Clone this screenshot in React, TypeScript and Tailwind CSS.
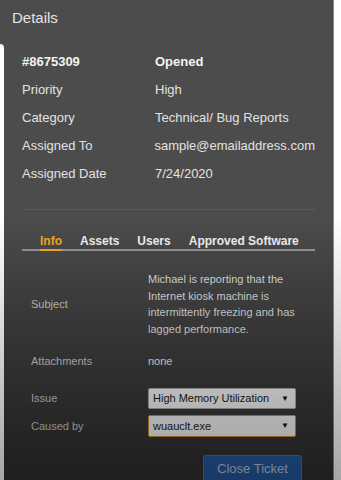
import React from "react";

const details: [string, string][] = [
  ["Priority", "High"],
  ["Category", "Technical/ Bug Reports"],
  ["Assigned To", "sample@emailaddress.com"],
  ["Assigned Date", "7/24/2020"],
];

const tabs = ["Info", "Assets", "Users", "Approved Software"];

function Select({ value, focused = false }: { value: string; focused?: boolean }) {
  return (
    <div
      className={`flex w-[148px] items-center justify-between rounded-[2px] border bg-[#f2f2f2] pl-[4px] pr-[6px] text-[11px] text-[#1a1a1a] ${
        focused ? "h-[22px] border-[#c98b2a]" : "h-[21px] border-[#a8a8a8]"
      }`}
    >
      <span>{value}</span>
      <span className="text-[8px] leading-none text-[#111]">▼</span>
    </div>
  );
}

export default function App() {
  return (
    <div className="relative h-[480px] w-[341px] overflow-hidden bg-white font-['Liberation_Sans',Arial,sans-serif]">
      {/* Drawer */}
      <div className="relative h-full w-[334px] border-r border-[#8c8c8c] bg-gradient-to-b from-[#4c4c4c] from-45% to-[#2f2f2f]">
        {/* page peeking through on the left */}
        <div className="absolute bottom-0 left-0 top-[44px] w-[4px] rounded-tr-[4px] bg-white" />

        <div className="px-[12px] pt-[9px] text-[15px] leading-[18px] text-[#e4e4e4]">Details</div>

        <div className="pl-[22px] pr-[18px]">
          <div className="mt-[21px] text-[13px] leading-[28px] text-[#e2e2e2]">
            <div className="flex font-bold text-[#f2f2f2]">
              <span className="w-[133px]">#8675309</span>
              <span>Opened</span>
            </div>
            {details.map(([label, value]) => (
              <div key={label} className="flex">
                <span className="w-[133px]">{label}</span>
                <span>{value}</span>
              </div>
            ))}
          </div>

          <div className="mt-[21px] border-t border-dotted border-[#6a6a6a]" />

          {/* Tabs */}
          <div className="mt-[24px] flex gap-[18px] border-b-2 border-[#959595] pl-[18px] text-[12px] font-bold leading-[14px]">
            {tabs.map((t, i) => (
              <div
                key={t}
                className={`-mb-[2px] pb-[1px] ${
                  i === 0 ? "border-b-2 border-[#f5a623] text-[#f5a623]" : "border-b-2 border-transparent text-[#f0f0f0]"
                }`}
              >
                {t}
              </div>
            ))}
          </div>

          {/* Info */}
          <div className="pl-[9px] text-[11px]">
            <div className="mt-[20px] flex items-center">
              <span className="w-[117px] text-[#c4c4c4]">Subject</span>
              <p className="w-[150px] leading-[16.5px] text-[#dcdcdc]">
                Michael is reporting that the Internet kiosk machine is intermittently freezing and has lagged performance.
              </p>
            </div>
            <div className="mt-[16px] flex leading-[16px]">
              <span className="w-[117px] text-[#c4c4c4]">Attachments</span>
              <span className="text-[#e6e6e6]">none</span>
            </div>
            <div className="mt-[19px] flex items-center">
              <span className="w-[117px] text-[#c4c4c4]">Issue</span>
              <Select value="High Memory Utilization" />
            </div>
            <div className="mt-[6px] flex items-center">
              <span className="w-[117px] text-[#c4c4c4]">Caused by</span>
              <Select value="wuauclt.exe" focused />
            </div>
            <div className="mt-[18px] flex justify-end pr-[13px]">
              <button className="h-[28px] w-[99px] rounded-[3px] border border-[#3a70b8] bg-[#24599f] text-[13px] text-[#b4c6e0]">
                Close Ticket
              </button>
            </div>
          </div>
        </div>
      </div>

      {/* shading over the lower part of the screen */}
      <div className="pointer-events-none absolute inset-0 bg-gradient-to-b from-transparent from-45% to-black/35" />
    </div>
  );
}
